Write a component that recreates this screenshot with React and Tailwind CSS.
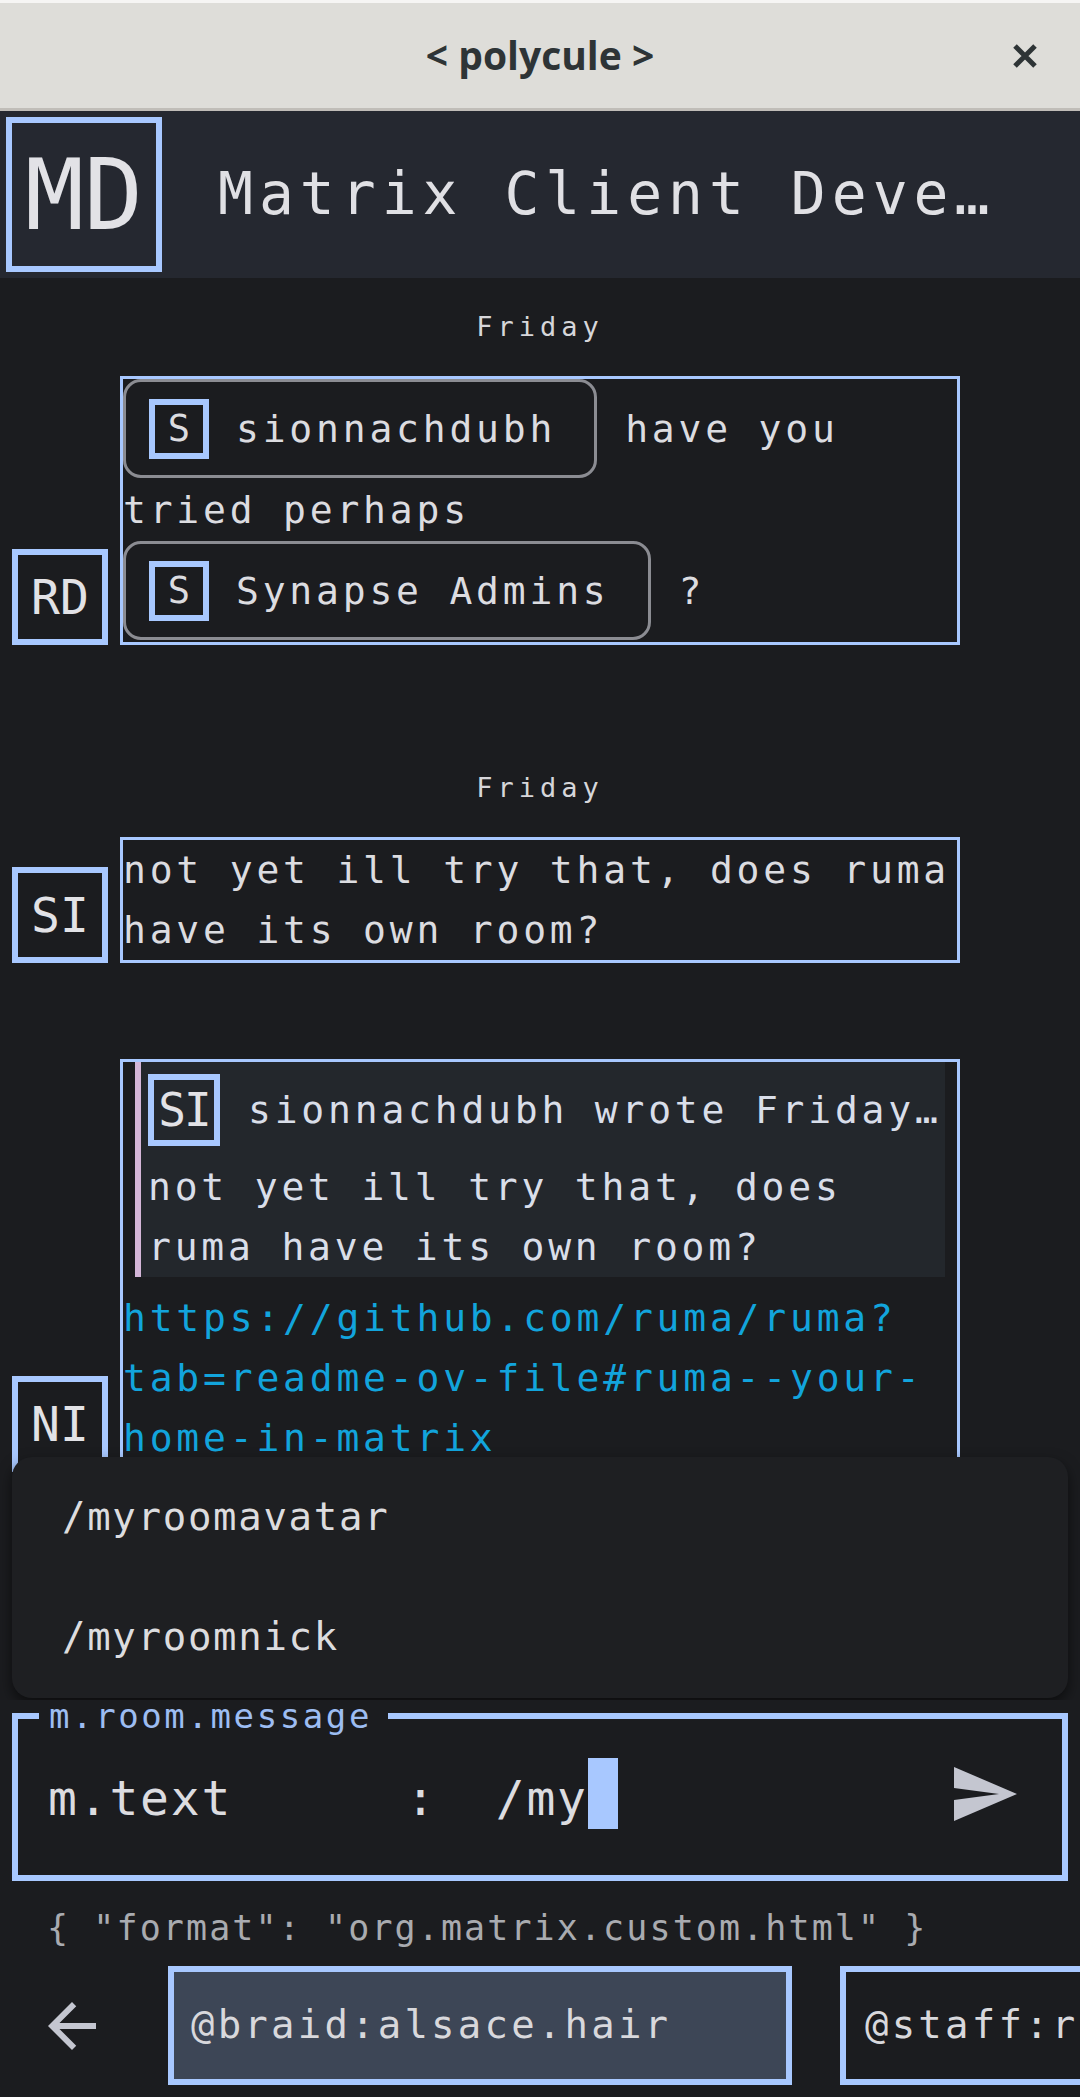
import React from "react";

function Avatar({ label, size = "w-[96px] h-[96px]", text = "text-[48px]" }) {
  return (
    <div
      className={`${size} ${text} shrink-0 border-[6px] border-[#a8c8ff] flex items-center justify-center leading-none text-[#e2e2e6]`}
    >
      {label}
    </div>
  );
}

function Pill({ initial, name }) {
  return (
    <div className="flex h-[99px] items-center rounded-[18px] border-[3px] border-[#8b8c92] pl-[23px] pr-[38px]">
      <div className="w-[60px] h-[60px] border-[6px] border-[#a8c8ff] flex items-center justify-center text-[37px] leading-none tracking-normal">
        {initial}
      </div>
      <span className="ml-[27px]">{name}</span>
    </div>
  );
}

function DateRow() {
  return (
    <div className="h-[98px] flex items-center justify-center text-[27px] tracking-[5px] text-[#d6d6da]">
      Friday
    </div>
  );
}

function TitleBar() {
  return (
    <div className="h-[111px] shrink-0 border-t-[3px] border-t-[#f6f5f4] border-b-[3px] border-b-[#c0bdb8] bg-[#deddd9] grid grid-cols-[1fr_auto_1fr] items-center">
      <div />
      <div className="font-['Open_Sans',sans-serif] font-bold text-[39px] text-[#2e3436] leading-none pb-[2px]">
        &lt; polycule &gt;
      </div>
      <div className="flex justify-end pr-[42px]">
        <svg width="26" height="26" viewBox="0 0 26 26">
          <path d="M3 3L23 23M23 3L3 23" stroke="#2e3436" strokeWidth="5" strokeLinecap="butt" />
        </svg>
      </div>
    </div>
  );
}

function RoomHeader() {
  return (
    <div className="h-[167px] shrink-0 bg-[#252830] flex items-center pl-[6px]">
      <Avatar label="MD" size="w-[156px] h-[155px]" text="text-[98px] tracking-normal" />
      <div className="ml-[56px] text-[58px] tracking-[6px] whitespace-nowrap text-[#e0e0e4]">
        Matrix Client Deve…
      </div>
    </div>
  );
}

function Timeline() {
  return (
    <div className="relative h-[1422px] shrink-0 overflow-hidden text-[38px] tracking-[3.8px] leading-[60px] text-[#dcdce0] whitespace-nowrap">
      <div className="flex flex-col">
        {/* RD */}
        <DateRow />
        <div className="flex items-end gap-[12px] pl-[12px] mb-[94px]">
          <Avatar label="RD" text="text-[48px] tracking-normal" />
          <div className="w-[840px] border-[3px] border-[#a8c8ff] pb-[2px]">
            <div className="flex items-center">
              <Pill initial="S" name="sionnachdubh" />
              <span className="ml-[28px]">have you</span>
            </div>
            <div className="h-[63px] flex items-center">tried perhaps</div>
            <div className="flex items-center">
              <Pill initial="S" name="Synapse Admins" />
              <span className="ml-[28px]">?</span>
            </div>
          </div>
        </div>

        {/* SI */}
        <DateRow />
        <div className="flex items-end gap-[12px] pl-[12px] mb-[96px]">
          <Avatar label="SI" text="text-[48px] tracking-normal" />
          <div className="w-[840px] border-[3px] border-[#a8c8ff]">
            <div>not yet ill try that, does ruma</div>
            <div>have its own room?</div>
          </div>
        </div>

        {/* NI */}
        <div className="flex items-end gap-[12px] pl-[12px]">
          <Avatar label="NI" text="text-[48px] tracking-normal" />
          <div className="w-[840px] border-[3px] border-[#a8c8ff] pb-[1px]">
            <div className="mx-[12px] border-l-[6px] border-[#d4b6d8] bg-[#23272c] pt-[12px] pl-[7px] text-[#d9dee9]">
              <div className="flex items-center h-[72px]">
                <Avatar label="SI" size="w-[72px] h-[72px]" text="text-[46px] tracking-[-2px]" />
                <span className="ml-[28px]">sionnachdubh wrote Friday…</span>
              </div>
              <div className="mt-[11px]">
                <div>not yet ill try that, does</div>
                <div>ruma have its own room?</div>
              </div>
            </div>
            <div className="mt-[11px] text-[#12a4dc]">
              <div>https://github.com/ruma/ruma?</div>
              <div>tab=readme-ov-file#ruma--your-</div>
              <div>home-in-matrix</div>
            </div>
          </div>
        </div>
      </div>

      {/* command suggestions */}
      <div className="absolute left-[12px] right-[12px] bottom-[2px] h-[241px] rounded-[20px] bg-[#1e1f22] shadow-[0_6px_14px_rgba(0,0,0,0.55)] text-[39px] tracking-[1.7px] text-[#dcdcdf]">
        <div className="h-[120px] flex items-center pl-[50px]">/myroomavatar</div>
        <div className="h-[120px] flex items-center pl-[50px]">/myroomnick</div>
      </div>
    </div>
  );
}

function Composer() {
  return (
    <div className="px-[12px] pt-[2px]">
      <fieldset className="border-[6px] border-[#a8c8ff]">
        <legend className="ml-[21px] pl-[10px] pr-[16px] text-[34px] leading-[28px] tracking-[2.6px] text-[#9dbdf2]">
          m.room.message
        </legend>
        <div className="flex h-[145px] items-center pb-[18px] pl-[30px] pr-[42px] text-[48px] tracking-[1.8px] text-[#dcdce0] whitespace-nowrap">
          <span className="w-[358px] pt-[10px] leading-[71px]">m.text</span>
          <span className="pt-[10px] leading-[71px]">:</span>
          <span className="ml-[59px] pt-[10px] leading-[71px]">/my</span>
          <span className="w-[30px] h-[71px] bg-[#a8c8ff]" />
          <svg className="ml-auto" width="72" height="72" viewBox="0 0 24 24">
            <path d="M2.01 21L23 12 2.01 3 2 10l15 2-15 2z" fill="#c4c6d0" />
          </svg>
        </div>
      </fieldset>
      <div className="mt-[27px] h-[40px] leading-[40px] pl-[35px] text-[35px] tracking-[2.1px] text-[#a9abb0] whitespace-nowrap">
        {'{ "format": "org.matrix.custom.html" }'}
      </div>
    </div>
  );
}

function AccountBar() {
  return (
    <div className="mt-[18px] h-[119px] flex items-center overflow-hidden text-[39px] tracking-[3.2px] text-[#d8d8dc] whitespace-nowrap">
      <svg className="ml-[36px] shrink-0" width="72" height="72" viewBox="0 0 24 24">
        <path d="M20 11H7.83l5.59-5.59L12 4l-8 8 8 8 1.41-1.41L7.83 13H20v-2z" fill="#c4c6d0" />
      </svg>
      <div className="ml-[60px] w-[624px] h-[119px] shrink-0 border-[6px] border-[#a8c8ff] bg-[#3d4656] flex items-center pl-[17px]">
        @braid:alsace.hair
      </div>
      <div className="ml-[48px] w-[420px] h-[119px] shrink-0 border-[6px] border-[#a8c8ff] bg-[#1b1c1f] flex items-center pl-[19px]">
        @staff:ruma.io
      </div>
    </div>
  );
}

export default function App() {
  return (
    <div className="w-[1080px] h-[2097px] overflow-hidden flex flex-col bg-[#1b1c1f] font-['DejaVu_Sans_Mono',monospace]">
      <TitleBar />
      <RoomHeader />
      <Timeline />
      <Composer />
      <AccountBar />
    </div>
  );
}
